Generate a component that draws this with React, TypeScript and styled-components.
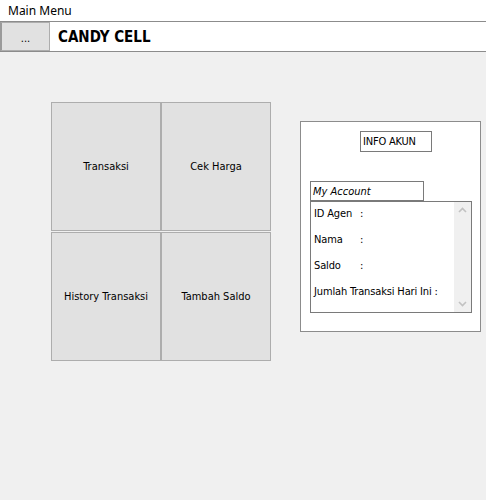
import React from "react";
import styled, { createGlobalStyle } from "styled-components";

const Global = createGlobalStyle`
  html, body { margin: 0; padding: 0; background: #f0f0f0; }
  body { font-family: "DejaVu Sans Condensed", "DejaVu Sans", sans-serif; font-size: 11px; color: #000; }
  * { box-sizing: border-box; }
`;

const Window = styled.div`
  width: 486px;
  height: 500px;
  background: #f0f0f0;
  display: flex;
  flex-direction: column;
`;

const TitleBar = styled.div`
  height: 21px;
  background: #ffffff;
  padding-left: 8px;
  display: flex;
  align-items: center;
  font-family: "Noto Sans", "Open Sans", sans-serif;
  font-size: 12px;
`;

const Header = styled.div`
  height: 31px;
  background: #ffffff;
  border-top: 1px solid #8c8c8c;
  border-bottom: 1px solid #8c8c8c;
  display: flex;
  align-items: stretch;
`;

const MenuButton = styled.button`
  width: 50px;
  margin: 0;
  padding: 0 0 5px;
  background: #e1e1e1;
  border: 1px solid #adadad;
  border-left: 2px solid #9a9a9a;
  font-family: inherit;
  font-size: 11px;
  color: #000;
  display: flex;
  align-items: flex-end;
  justify-content: center;
`;

const Brand = styled.div`
  padding-left: 8px;
  display: flex;
  align-items: center;
  font-family: "DejaVu Sans Condensed", "DejaVu Sans", sans-serif;
  font-weight: bold;
  font-size: 15px;
`;

const Body = styled.div`
  display: flex;
  align-items: flex-start;
  padding-left: 51px;
`;

const Grid = styled.div`
  margin-top: 50px;
  display: grid;
  grid-template-columns: 110px 110px;
  grid-template-rows: 129px 129px;
  column-gap: 0;
  row-gap: 1px;
`;

const Tile = styled.button`
  margin: 0;
  padding: 0;
  background: #e1e1e1;
  border: 1px solid #adadad;
  font-family: inherit;
  font-size: 11px;
  color: #000;
`;

const Panel = styled.div`
  margin-top: 69px;
  margin-left: 29px;
  width: 181px;
  height: 211px;
  background: #ffffff;
  border: 1px solid #8c8c8c;
  padding: 9px 0 0 9px;
  display: flex;
  flex-direction: column;
`;

const InfoLabel = styled.div`
  margin-left: 50px;
  width: 72px;
  height: 21px;
  border: 1px solid #7a7a7a;
  padding-left: 2px;
  display: flex;
  align-items: center;
  letter-spacing: -0.2px;
`;

const AccountLabel = styled.div`
  margin-top: 29px;
  width: 114px;
  height: 20px;
  border: 1px solid #7a7a7a;
  padding-left: 2px;
  display: flex;
  align-items: center;
  font-style: italic;
`;

const ListBox = styled.div`
  width: 162px;
  height: 112px;
  border: 1px solid #7a7a7a;
  display: flex;
`;

const ListRows = styled.div`
  flex: 1;
  padding: 5px 0 0 3px;
  display: flex;
  flex-direction: column;
  letter-spacing: -0.15px;
`;

const Row = styled.div`
  height: 26px;
  display: flex;
  align-items: flex-start;
  white-space: pre;
`;

const Key = styled.span<{ $w?: number }>`
  display: inline-block;
  width: ${(p) => (p.$w ? `${p.$w}px` : "auto")};
`;

const ScrollBar = styled.div`
  width: 17px;
  background: #f0f0f0;
  display: flex;
  flex-direction: column;
  justify-content: space-between;
  align-items: center;
  padding: 5px 0 5px;
`;

const Chevron = ({ up }: { up?: boolean }) => (
  <svg width="9" height="6" viewBox="0 0 9 6">
    <path
      d={up ? "M1 5 L4.5 1.5 L8 5" : "M1 1 L4.5 4.5 L8 1"}
      fill="none"
      stroke="#c2c2c2"
      strokeWidth="1.6"
    />
  </svg>
);

export default function App() {
  return (
    <Window>
      <Global />
      <TitleBar>Main Menu</TitleBar>
      <Header>
        <MenuButton>...</MenuButton>
        <Brand>CANDY CELL</Brand>
      </Header>
      <Body>
        <Grid>
          <Tile>Transaksi</Tile>
          <Tile>Cek Harga</Tile>
          <Tile>History Transaksi</Tile>
          <Tile>Tambah Saldo</Tile>
        </Grid>
        <Panel>
          <InfoLabel>INFO AKUN</InfoLabel>
          <AccountLabel>My Account</AccountLabel>
          <ListBox>
            <ListRows>
              <Row><Key $w={46}>ID Agen</Key>:</Row>
              <Row><Key $w={46}>Nama</Key>:</Row>
              <Row><Key $w={46}>Saldo</Key>:</Row>
              <Row>Jumlah Transaksi Hari Ini :</Row>
            </ListRows>
            <ScrollBar>
              <Chevron up />
              <Chevron />
            </ScrollBar>
          </ListBox>
        </Panel>
      </Body>
    </Window>
  );
}
